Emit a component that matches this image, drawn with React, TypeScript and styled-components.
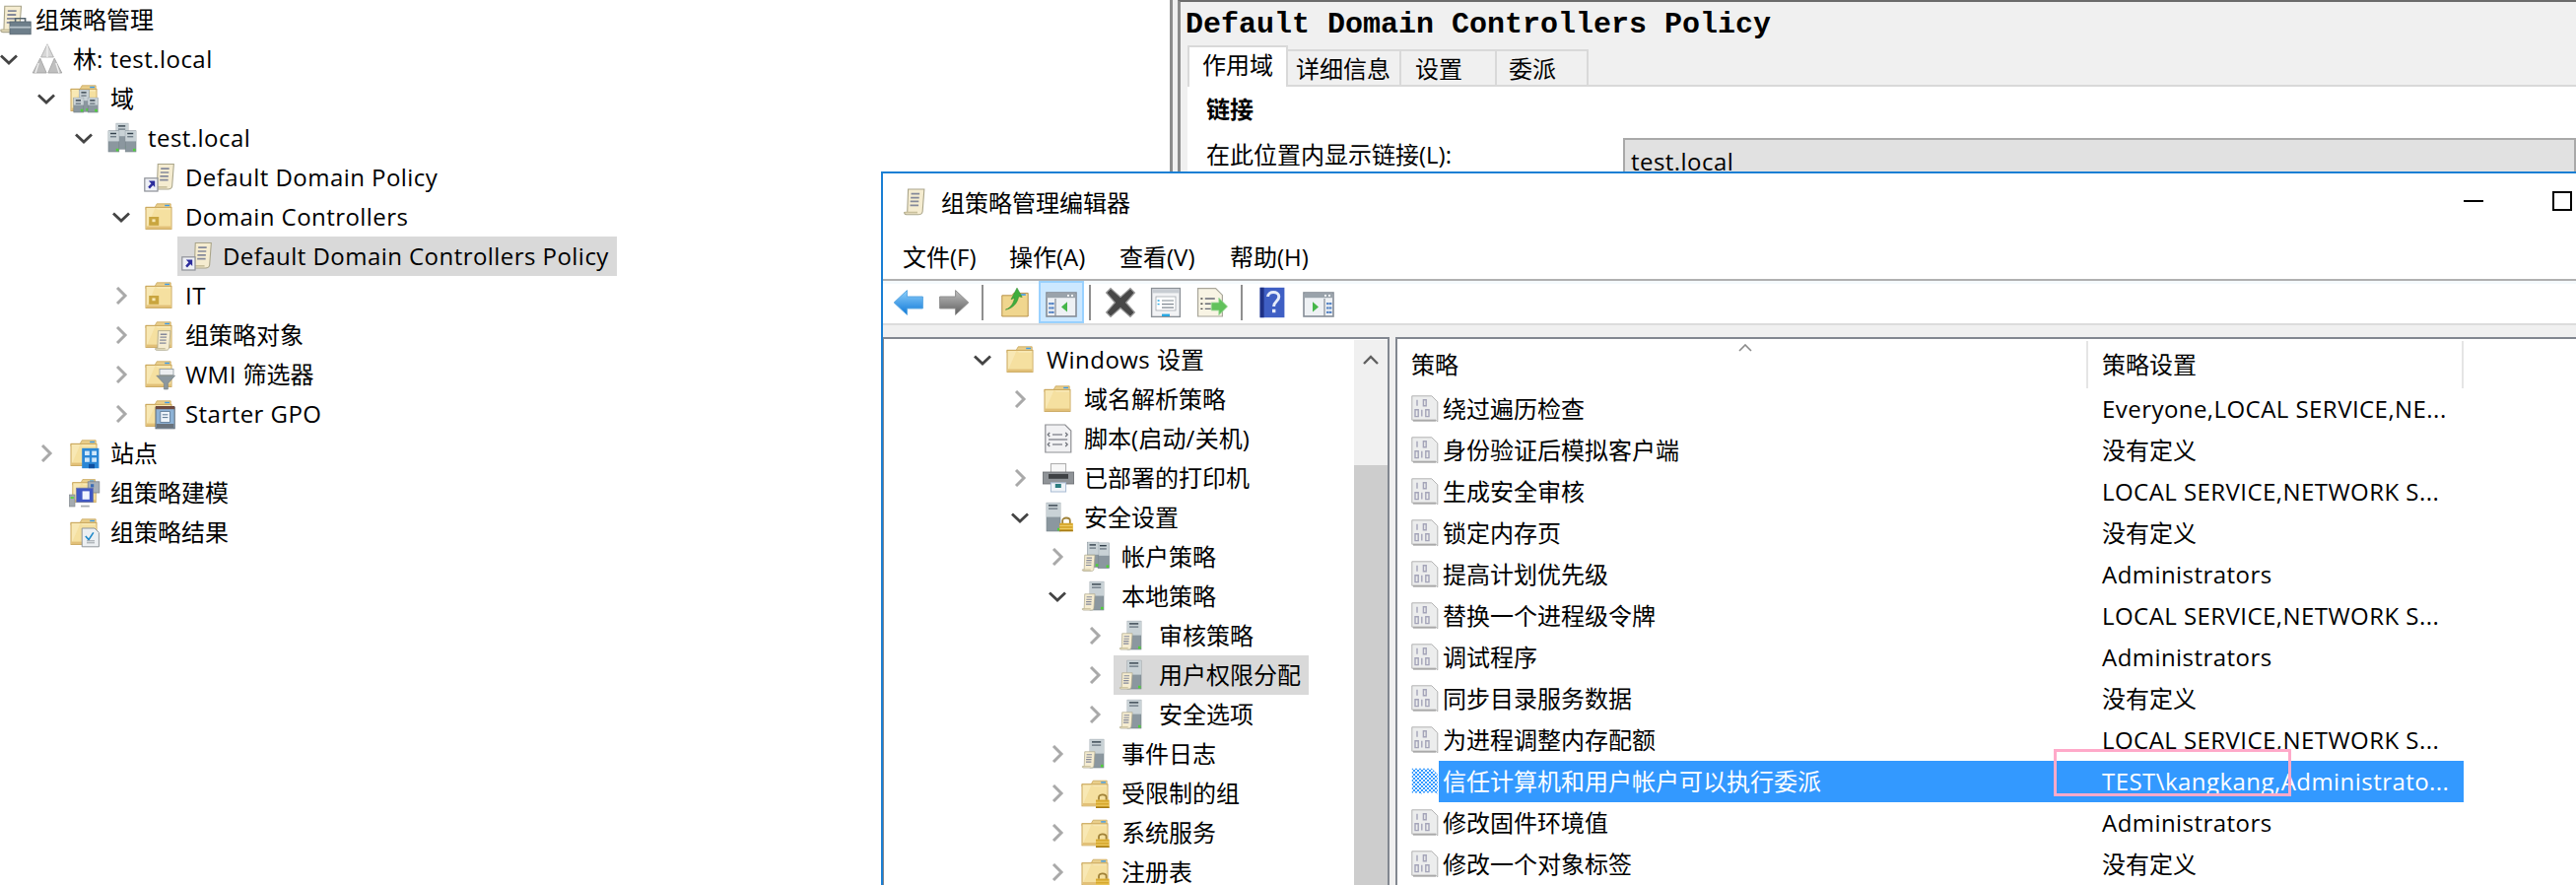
import React from "react";
import styled, { createGlobalStyle } from "styled-components";

const Global = createGlobalStyle`
  html, body { margin: 0; padding: 0; background: #fff; overflow: hidden; }
  body { font-family: "Open Sans", "Noto Sans CJK SC", sans-serif; font-size: 24px; color: #000; }
`;

const Page = styled.div`
  position: relative;
  width: 2614px;
  height: 898px;
  overflow: hidden;
  background: #fff;
  display: grid;
  grid-template-columns: 1187px 1fr;
`;

/* Latin runs are spaced a little wider than Open Sans to match the reference's UI font. */
const Latin = styled.span`
  letter-spacing: 0.45px;
`;

const Txt = ({ children }: { children: string }) => (
  <>
    {children.split(/([\x20-\x7e]+)/).map((part, i) =>
      i % 2 === 1 ? <Latin key={i}>{part}</Latin> : part
    )}
  </>
);

/* ---------- drawing helpers ---------- */
const Svg = styled.svg<{ $w: number; $h: number }>`
  display: block;
  flex: none;
  width: ${(p) => p.$w}px;
  height: ${(p) => p.$h}px;
`;

const Folder = () => (
  <g>
    <path d="M1 3.2h4.6L6.6 1.4h7v3H1z" fill="#e9cf8c" stroke="#c9a65a" strokeWidth=".4" />
    <rect x="10.6" y="1.9" width="2.4" height=".7" fill="#3d9be9" />
    <rect x="1" y="3.2" width="13" height="11" fill="#f8e8b4" stroke="#c9a65a" strokeWidth=".5" />
    <path d="M5.8 3.4 7 4.4h6.8v9.6H1.2" fill="#f3d98f" opacity=".55" />
    <rect x="1.2" y="12.8" width="12.6" height="1.2" fill="#e2c078" />
  </g>
);

const Tower = ({ x, y, h = 12, w = 6 }: { x: number; y: number; h?: number; w?: number }) => (
  <g>
    <rect x={x} y={y} width={w} height={h} fill="#8b979f" stroke="#76828a" strokeWidth=".3" />
    <rect x={x} y={y} width={w} height={h * 0.5} fill="#c9d2d6" />
    <rect x={x + 1} y={y + 1} width={w - 2.4} height=".7" fill="#34424d" />
    <rect x={x + 1} y={y + 2.6} width={w - 2.4} height=".7" fill="#6f7c86" />
    <rect x={x + w - 1.5} y={y + h - 1.6} width="1.3" height="1.3" fill="#4fd03a" />
  </g>
);

const Scroll = ({ x, y, s = 1 }: { x: number; y: number; s?: number }) => (
  <g transform={`translate(${x} ${y}) scale(${s})`}>
    <path d="M2 1h7.6L8.8 11.6c-.2 1.2-1 1.4-2 1.4H1.2c-.8 0-1-.4-1-1h1.400z" fill="#f5ecd0" stroke="#a9a489" strokeWidth=".5" />
    <path d="M3.400 3.200h4M3.200 5h4M3 6.800h4M2.900 8.600h4" stroke="#85899a" strokeWidth=".8" />
    <path d="M.4 12h6" stroke="#c9c09c" strokeWidth=".8" />
  </g>
);

const Lock = ({ x, y }: { x: number; y: number }) => (
  <g transform={`translate(${x} ${y})`}>
    <path d="M1.700 3.400V2c0-1.800 3.800-1.800 3.800 0v1.400" fill="none" stroke="#a08238" strokeWidth=".9" />
    <rect x=".2" y="3.300" width="6.800" height="4.200" fill="#d7a82e" />
    <path d="M.2 4.600h6.800M.2 6.100h6.800" stroke="#f1d06a" strokeWidth=".5" />
    <rect x=".2" y="6.800" width="6.800" height=".7" fill="#a67c18" />
  </g>
);

const Shortcut = () => (
  <g>
    <rect x=".4" y="8.400" width="6.600" height="6.600" fill="#eef0f6" stroke="#8d9097" strokeWidth=".6" />
    <path d="M2.400 9.800h3.200V13l-1-1-1.600 1.800-.9-.9 1.600-1.800z" fill="#2b2c9c" />
  </g>
);

const WinPane = ({ flip }: { flip?: boolean }) => (
  <g>
    <rect x=".5" y="3" width="15" height="12" fill="#eef1f4" stroke="#858d96" strokeWidth=".8" />
    <rect x=".9" y="3.400" width="14.200" height="2.200" fill="#9aa3ab" />
    <rect x="11" y="4" width="1" height=".9" fill="#fff" />
    <rect x="13" y="4" width="1" height=".9" fill="#fff" />
    <path d={flip ? "M11 6v9" : "M5 6v9"} stroke="#858d96" strokeWidth=".6" />
    {(flip ? [12, 13.4] : [1.6, 3]).map((x) => (
      <g key={x}>
        <rect x={x} y="8" width="1.300" height="1.100" fill="#5a87c6" />
        <rect x={x} y="10.200" width="1.300" height="1.100" fill="#5a87c6" />
        <rect x={x} y="12.400" width="1.300" height="1.100" fill="#5a87c6" />
      </g>
    ))}
    <path d={flip ? "M5 7.600l3 2.600-3 2.600z" : "M11 7.600l-3 2.600 3 2.600z"} fill="#45b649" />
  </g>
);

const drawings: Record<string, React.ReactNode> = {
  root: (
    <>
      <Scroll x={0.2} y={0} s={1.1} />
      <rect x="5" y="9" width="10.600" height="6.400" fill="#6d7e8a" stroke="#56656f" strokeWidth=".4" />
      <path d="M7.800 9V7.400h5V9" fill="none" stroke="#56656f" strokeWidth=".8" />
      <rect x="5" y="11.400" width="10.600" height=".9" fill="#b5c1c9" />
    </>
  ),
  forest: (
    <>
      <path d="M8 .4 11.200 7H4.800z" fill="#d7d7d7" stroke="#a8a8a8" strokeWidth=".4" />
      <path d="M4.400 7.600 7.600 15H.6z" fill="#bfbfbf" stroke="#a0a0a0" strokeWidth=".4" />
      <path d="M11.600 7.600 15.400 15H8.400z" fill="#bfbfbf" stroke="#a0a0a0" strokeWidth=".4" />
      <path d="M8 .8V7M3.600 10 2 15M12.400 10 14 15" stroke="#efefef" strokeWidth=".7" />
    </>
  ),
  domains: (
    <>
      <Folder />
      <Tower x={5.2} y={3.6} h={11} w={5} />
      <Tower x={2.4} y={7.6} h={7.4} w={5} />
      <Tower x={9.6} y={7.6} h={7.4} w={5} />
    </>
  ),
  domain: (
    <>
      <Tower x={5} y={0.6} h={13} w={6} />
      <Tower x={1} y={4.4} h={10.6} w={5.4} />
      <Tower x={9.6} y={4.4} h={10.6} w={5.4} />
    </>
  ),
  link: (
    <>
      <Scroll x={5} y={0.2} s={1.06} />
      <Shortcut />
    </>
  ),
  ou: (
    <>
      <Folder />
      <rect x="2.600" y="8" width="5" height="4.400" fill="#c9a53f" />
      <rect x="4.200" y="9.200" width="1.600" height="1.400" fill="#f8e8b4" />
    </>
  ),
  gpos: (
    <>
      <Folder />
      <Scroll x={5.6} y={5} s={0.82} />
    </>
  ),
  wmi: (
    <>
      <Folder />
      <rect x="8" y="5.200" width="7" height="3.200" fill="#eceef0" stroke="#8d969c" strokeWidth=".4" />
      <path d="M6.400 8.600h9.400l-3.600 4v2.900h-2v-2.900z" fill="#8b979e" stroke="#6f7a80" strokeWidth=".3" />
    </>
  ),
  starter: (
    <>
      <Folder />
      <rect x="6" y="4.600" width="9.600" height="10.800" fill="#8db2d6" stroke="#5d6670" strokeWidth=".5" />
      <rect x="6" y="4" width="9.600" height="1.600" fill="#6e4a40" />
      <rect x="8.400" y="6.800" width="4.800" height="5.400" fill="#eef4fa" stroke="#5a7590" strokeWidth=".4" />
      <path d="M9.400 8.400h2.800M9.400 9.800h2.800" stroke="#5a7590" strokeWidth=".5" />
      <rect x="6.400" y="13" width="8.800" height="2" fill="#69727c" />
    </>
  ),
  sites: (
    <>
      <Folder />
      <rect x="6.600" y="5.400" width="8.600" height="10.200" fill="#2b87d6" />
      <rect x="8" y="6.800" width="2.400" height="2.200" fill="#cfe7fa" />
      <rect x="11.600" y="6.800" width="2.400" height="2.200" fill="#cfe7fa" />
      <rect x="8" y="10.200" width="2.400" height="2.200" fill="#cfe7fa" />
      <rect x="11.600" y="10.200" width="2.400" height="2.200" fill="#cfe7fa" />
      <rect x="10" y="13.400" width="3" height="2.200" fill="#0e4fa0" />
    </>
  ),
  modeling: (
    <>
      <g transform="translate(1 0) scale(.9)"><Folder /></g>
      <rect x="9.600" y="2.400" width="5.800" height="5.600" fill="#a8b0b8" stroke="#7c848c" strokeWidth=".4" />
      <rect x="11" y="3.600" width="1.600" height="1.600" fill="#3c6db4" />
      <rect x="3.800" y="5.600" width="8.400" height="7.200" fill="#3f57c4" stroke="#7079a8" strokeWidth=".4" />
      <rect x="6.800" y="7.200" width="3.600" height="4.200" fill="#f0f4ff" />
      <rect x=".2" y="9" width="2.800" height="6" fill="#a5abb0" stroke="#7a8086" strokeWidth=".3" />
      <rect x=".8" y="10" width="1.600" height="1" fill="#5bd048" />
      <path d="M6 14.800h4.400" stroke="#a6abb0" strokeWidth=".9" />
    </>
  ),
  results: (
    <>
      <Folder />
      <path d="M6.600 6h6.400l2.200 2.200v7.200H6.600z" fill="#eceff2" stroke="#8f959a" strokeWidth=".5" />
      <path d="m8.400 10 1.600 1.800 2.400-3.600" fill="none" stroke="#1e88c8" strokeWidth=".8" />
      <path d="M9 13.400h4M9 12.400h4" stroke="#9aa0a6" strokeWidth=".5" />
    </>
  ),
  folder: <Folder />,
  script: (
    <>
      <path d="M1.400 1h10l3 3v11h-13z" fill="#f1f1f3" stroke="#8e8f93" strokeWidth=".6" />
      <path d="M3.600 5l-1 1 1 1M11.600 5l1 1-1 1M3.600 10l-1 1 1 1M11.600 10l1 1-1 1" fill="none" stroke="#6d7078" strokeWidth=".6" />
      <path d="M5 6h5M5 11h5M3 8.500h9.600" stroke="#8d8f98" strokeWidth=".7" />
    </>
  ),
  printer: (
    <>
      <rect x="4.200" y=".8" width="7.600" height="5" fill="#f7f7f7" stroke="#a9a9a9" strokeWidth=".5" />
      <rect x=".2" y="5" width="15.600" height="6" fill="#8f9397" stroke="#696d71" strokeWidth=".4" />
      <rect x="3" y="6" width="10" height="2.400" fill="#3e4144" />
      <rect x="4.200" y="10.400" width="7.600" height="4.600" fill="#eef3f8" stroke="#a7bad2" strokeWidth=".5" />
      <rect x="6.400" y="11" width="3" height="2" fill="#2c7d80" />
    </>
  ),
  secure: (
    <>
      <Tower x={2} y={0.6} h={14.4} w={7} />
      <Lock x={8.4} y={7.6} />
    </>
  ),
  accounts: (
    <>
      <Tower x={9} y={1} h={12.8} w={5.8} />
      <Tower x={3.8} y={0.6} h={12.6} w={5.6} />
      <Scroll x={1} y={6.4} s={0.68} />
    </>
  ),
  policy: (
    <>
      <Tower x={5} y={0.6} h={14.4} w={7} />
      <Scroll x={1} y={6.2} s={0.68} />
    </>
  ),
  folderLock: (
    <>
      <g transform="translate(0 .2)"><Folder /></g>
      <Lock x={7.8} y={8} />
    </>
  ),
  back: (
    <>
      <defs>
        <linearGradient id="bk" x1="0" y1="0" x2="0" y2="1">
          <stop offset="0" stopColor="#8fd0fb" />
          <stop offset="1" stopColor="#0f78d8" />
        </linearGradient>
      </defs>
      <path d="M.6 8 7.200 1.800V5h8v6h-8v3.200z" fill="url(#bk)" stroke="#5aa6e2" strokeWidth=".5" />
    </>
  ),
  forward: (
    <>
      <defs>
        <linearGradient id="fw" x1="0" y1="0" x2="0" y2="1">
          <stop offset="0" stopColor="#c0c0c0" />
          <stop offset="1" stopColor="#5f5f5f" />
        </linearGradient>
      </defs>
      <path d="M15.400 8 8.800 1.800V5h-8v6h8v3.200z" fill="url(#fw)" stroke="#8f8f8f" strokeWidth=".5" />
    </>
  ),
  up: (
    <>
      <path d="M1.400 4.400h5l1-1.200h7.200V15H1.400z" fill="#f0d68e" stroke="#b9934a" strokeWidth=".5" />
      <rect x="11" y="3.600" width="2.400" height=".8" fill="#3d9be9" />
      <path d="M3.200 11.600c2.800-1 4-3.200 4.600-6L6 6.400 9 .6l2.600 4.600-1.800-.3C9.400 8 7 11 3.200 11.600z" fill="#3fae3c" stroke="#2d8c2c" strokeWidth=".3" />
    </>
  ),
  treeOn: <WinPane />,
  treeOff: <WinPane flip />,
  del: (
    <path d="M.8 3 3 .8 8 5.200 13 .8 15.200 3 10.800 8l4.400 5-2.200 2.200L8 10.800 3 15.200.8 13 5.200 8z" fill="#474747" stroke="#9a9a9a" strokeWidth=".6" />
  ),
  props: (
    <>
      <rect x=".8" y=".8" width="14.400" height="14.400" fill="#f2f3f5" stroke="#8b9096" strokeWidth=".7" />
      <rect x="1.200" y="1.200" width="13.600" height="2" fill="#c7ccd2" />
      <rect x="3" y="5" width="10" height="7" fill="#fff" stroke="#a3a8ae" strokeWidth=".4" />
      <path d="M6 7h6M6 8.800h6M6 10.600h6" stroke="#7f8790" strokeWidth=".6" />
      <path d="M3.800 7h1M3.800 8.800h1" stroke="#29a7e1" strokeWidth=".7" />
      <rect x="6" y="13.800" width="4" height="1.200" fill="#29a7e1" />
    </>
  ),
  exportList: (
    <>
      <path d="M.8.800h9l3.400 3.400v10.800H.8z" fill="#f8f4e4" stroke="#a8a69a" strokeWidth=".6" />
      <path d="M4.400 6h5M4.400 8.600h3M4.400 11.200h3" stroke="#666a75" strokeWidth=".7" />
      <path d="M2.200 6h1M2.200 8.600h1M2.200 11.200h1" stroke="#444" strokeWidth=".7" />
      <path d="M7.600 8h3.800V5.600L15.800 10l-4.400 4.400V12H7.600z" fill="#62c25c" stroke="#a5dca0" strokeWidth=".4" />
    </>
  ),
  help: (
    <>
      <rect x="1.800" y=".4" width="12.400" height="15.200" fill="#3f5fc4" />
      <rect x="1.800" y=".4" width="2" height="15.200" fill="#1f3286" />
      <path d="M5.800 5c0-3 5.600-3 5.600 0 0 2.400-2.600 2.400-2.600 5" fill="none" stroke="#e6ecfa" strokeWidth="1.500" />
      <rect x="8" y="11.400" width="1.700" height="1.700" fill="#e6ecfa" />
    </>
  ),
};

const Icon = ({ name, size = 32 }: { name: string; size?: number }) => (
  <Svg $w={size} $h={size} viewBox="0 0 16 16" aria-hidden="true">
    {drawings[name]}
  </Svg>
);

const BinaryIcon = ({ selected }: { selected?: boolean }) => (
  <Svg $w={28} $h={28} viewBox="0 0 14 14" aria-hidden="true">
    {selected ? (
      <>
        <defs>
          <pattern id="chk" width="2" height="2" patternUnits="userSpaceOnUse">
            <rect width="2" height="2" fill="#ffffff" />
            <rect width="1" height="1" fill="#3399ff" />
            <rect x="1" y="1" width="1" height="1" fill="#3399ff" />
          </pattern>
        </defs>
        <path d="M.4.400h10l3 3v10l-1-.8-6.600.2-1 .8-.8-.8H.4z" fill="url(#chk)" />
      </>
    ) : (
      <>
        <path d="M.4.400h10l3 3v10l-1-.8H.4z" fill="#eceded" stroke="#b3b3b3" strokeWidth=".5" />
        <path d="M1 12.900h11.500" stroke="#a9a9a9" strokeWidth=".9" />
        <path d="M3 2.400v3M6.200 2.400h1.400v3H6.200zM2 7.400h1.600v3.400H2zM5.400 7.400v3.400M7.400 7.400H9v3.400H7.400z" fill="none" stroke="#a4a4b8" strokeWidth=".7" />
      </>
    )}
  </Svg>
);

const ChevronSvg = ({ open }: { open?: boolean }) =>
  open ? (
    <Svg $w={18} $h={18} viewBox="0 0 18 18" aria-hidden="true">
      <path d="M1 5.500 9 13l8-7.500" fill="none" stroke="#444" strokeWidth="2.800" />
    </Svg>
  ) : (
    <Svg $w={18} $h={18} viewBox="0 0 18 18" aria-hidden="true">
      <path d="M5 1l8 8-8 8" fill="none" stroke="#a9a9a9" strokeWidth="3" />
    </Svg>
  );

/* ---------- tree ---------- */
const TreeList = styled.div<{ $top?: number }>`
  padding-top: ${(p) => p.$top ?? 0}px;
  min-width: 0;
`;

const TreeRowBox = styled.div<{ $pad: number }>`
  display: flex;
  align-items: center;
  height: 40px;
  padding-left: ${(p) => p.$pad}px;
  white-space: nowrap;
`;

const ChevronSlot = styled.span`
  width: 18px;
  flex: none;
`;

const TreeItem = styled.div<{ $selected?: boolean }>`
  display: flex;
  align-items: center;
  height: 40px;
  margin-left: 10px;
  padding: 0 8px 0 4px;
  background: ${(p) => (p.$selected ? "#d9d9d9" : "transparent")};
`;

const TreeLabel = styled.span`
  margin-left: 10px;
  line-height: 40px;
`;

const RootRow = styled.div`
  display: flex;
  align-items: center;
  height: 40px;
  white-space: nowrap;
`;

const RootLabel = styled.span`
  margin-left: 4px;
  line-height: 40px;
`;

type Node = { l: number; icon: string; text: string; state?: "open" | "closed"; selected?: boolean };

const TreeRow = ({ node, base }: { node: Node; base: number }) => (
  <TreeRowBox $pad={base + node.l * 38}>
    <ChevronSlot>{node.state && <ChevronSvg open={node.state === "open"} />}</ChevronSlot>
    <TreeItem $selected={node.selected}>
      <Icon name={node.icon} />
      <TreeLabel><Txt>{node.text}</Txt></TreeLabel>
    </TreeItem>
  </TreeRowBox>
);

const consoleTree: Node[] = [
  { l: 0, icon: "forest", text: "林: test.local", state: "open" },
  { l: 1, icon: "domains", text: "域", state: "open" },
  { l: 2, icon: "domain", text: "test.local", state: "open" },
  { l: 3, icon: "link", text: "Default Domain Policy" },
  { l: 3, icon: "ou", text: "Domain Controllers", state: "open" },
  { l: 4, icon: "link", text: "Default Domain Controllers Policy", selected: true },
  { l: 3, icon: "ou", text: "IT", state: "closed" },
  { l: 3, icon: "gpos", text: "组策略对象", state: "closed" },
  { l: 3, icon: "wmi", text: "WMI 筛选器", state: "closed" },
  { l: 3, icon: "starter", text: "Starter GPO", state: "closed" },
  { l: 1, icon: "sites", text: "站点", state: "closed" },
  { l: 1, icon: "modeling", text: "组策略建模" },
  { l: 1, icon: "results", text: "组策略结果" },
];

const editorTree: Node[] = [
  { l: 0, icon: "folder", text: "Windows 设置", state: "open" },
  { l: 1, icon: "folder", text: "域名解析策略", state: "closed" },
  { l: 1, icon: "script", text: "脚本(启动/关机)" },
  { l: 1, icon: "printer", text: "已部署的打印机", state: "closed" },
  { l: 1, icon: "secure", text: "安全设置", state: "open" },
  { l: 2, icon: "accounts", text: "帐户策略", state: "closed" },
  { l: 2, icon: "policy", text: "本地策略", state: "open" },
  { l: 3, icon: "policy", text: "审核策略", state: "closed" },
  { l: 3, icon: "policy", text: "用户权限分配", state: "closed", selected: true },
  { l: 3, icon: "policy", text: "安全选项", state: "closed" },
  { l: 2, icon: "policy", text: "事件日志", state: "closed" },
  { l: 2, icon: "folderLock", text: "受限制的组", state: "closed" },
  { l: 2, icon: "folderLock", text: "系统服务", state: "closed" },
  { l: 2, icon: "folderLock", text: "注册表", state: "closed" },
];

/* ---------- background policy panel ---------- */
const BackFrame = styled.div`
  border-left: 3px solid #8c8c8c;
  padding-left: 5px;
  background: #f0f0f0;
  min-width: 0;
`;

const BackPanel = styled.div`
  border-left: 3px solid #8c8c8c;
  border-top: 2px solid #6b6b6b;
  background: #f0f0f0;
  height: 100%;
`;

const PolicyTitle = styled.div`
  height: 42px;
  padding-left: 5px;
  font: bold 30px/46px "Liberation Mono", monospace;
  white-space: pre;
`;

const Tabs = styled.div`
  display: flex;
  align-items: flex-end;
  height: 42px;
  margin-left: 7px;
  border-bottom: 2px solid #d9d9d9;
`;

const Tab = styled.div<{ $w: number; $pad: number; $active?: boolean }>`
  width: ${(p) => p.$w}px;
  height: ${(p) => (p.$active ? 42 : 36)}px;
  padding-left: ${(p) => p.$pad}px;
  box-sizing: border-box;
  line-height: 36px;
  background: ${(p) => (p.$active ? "#fff" : "#f0f0f0")};
  border: 2px solid #d9d9d9;
  border-bottom: none;
  border-left-width: ${(p) => (p.$active ? 2 : 0)}px;
  margin-bottom: ${(p) => (p.$active ? -2 : 0)}px;
  position: relative;
`;

const TabBody = styled.div`
  margin-left: 7px;
  background: #fff;
  height: 400px;
  padding: 5px 0 0 19px;
`;

const SectionHeading = styled.div`
  font-weight: 700;
  line-height: 36px;
`;

const LinkRow = styled.div`
  display: flex;
  margin-top: 11px;
`;

const LinkLabel = styled.div`
  width: 423px;
  flex: none;
  line-height: 34px;
`;

const LinkValue = styled.div`
  flex: 1;
  height: 70px;
  box-sizing: border-box;
  padding: 8px 0 0 6px;
  line-height: 28px;
  background: #e1e1e1;
  border: 2px solid #a9a9a9;
`;

/* ---------- editor window ---------- */
const EditorWindow = styled.div`
  position: absolute;
  left: 894px;
  top: 174px;
  right: 0;
  bottom: 0;
  display: flex;
  flex-direction: column;
  background: #fff;
  border-top: 2px solid #1a7fd4;
  border-left: 2px solid #1a7fd4;
`;

const TitleBar = styled.div`
  display: flex;
  align-items: center;
  height: 56px;
  flex: none;
  padding: 0 4px 0 17px;
`;

const WindowTitle = styled.span`
  margin-left: 12px;
`;

const WindowControls = styled.div`
  margin-left: auto;
  display: flex;
  align-items: center;
  gap: 70px;
`;

const MinGlyph = styled.span`
  width: 20px;
  height: 2px;
  background: #000;
`;

const MaxGlyph = styled.span`
  width: 20px;
  height: 20px;
  box-sizing: border-box;
  border: 2px solid #000;
`;

const MenuBar = styled.div`
  display: flex;
  align-items: center;
  flex: none;
  padding: 3px 0 0 20px;
  box-sizing: border-box;
  height: 53px;
  border-bottom: 2px solid #b0b0b0;
`;

const MenuItem = styled.span<{ $w: number }>`
  width: ${(p) => p.$w}px;
`;

const Toolbar = styled.div`
  display: flex;
  align-items: center;
  flex: none;
  height: 45px;
  box-sizing: border-box;
  padding-left: 3px;
  background: linear-gradient(#f5fafd 0 3px, #fff 3px);
  border-bottom: 2px solid #dcdcdc;
`;

const ToolButton = styled.div<{ $gap?: number; $active?: boolean }>`
  width: 46px;
  height: 43px;
  flex: none;
  box-sizing: border-box;
  display: flex;
  align-items: center;
  justify-content: center;
  margin-left: ${(p) => p.$gap ?? 0}px;
  background: ${(p) => (p.$active ? "#cce8ff" : "transparent")};
  border: 2px solid ${(p) => (p.$active ? "#99d1ff" : "transparent")};
`;

const ToolSep = styled.div<{ $gap: number }>`
  width: 2px;
  height: 36px;
  flex: none;
  margin-left: ${(p) => p.$gap}px;
  background: #8f8f8f;
`;

const Workspace = styled.div`
  flex: 1;
  min-height: 0;
  display: flex;
  gap: 6px;
  padding-top: 12px;
  background: #f0f0f0;
`;

const TreePane = styled.div`
  width: 514px;
  flex: none;
  display: flex;
  background: #fff;
  border-top: 2px solid #828790;
  border-right: 2px solid #828790;
  border-left: 1px solid #828790;
  box-sizing: border-box;
  overflow: hidden;
`;

const TreeViewport = styled.div`
  flex: 1;
  min-width: 0;
  overflow: hidden;
  margin-left: -1px;
`;

const ScrollBar = styled.div`
  width: 34px;
  flex: none;
  margin-top: 1px;
  display: flex;
  flex-direction: column;
`;

const ScrollButton = styled.div`
  height: 40px;
  display: flex;
  align-items: center;
  justify-content: center;
  background: #f0f0f0;
`;

const ScrollTrack = styled.div`
  height: 87px;
  background: #f0f0f0;
`;

const ScrollThumb = styled.div`
  flex: 1;
  background: #cdcdcd;
`;

const ListPane = styled.div`
  flex: 1;
  min-width: 0;
  background: #fff;
  border-top: 2px solid #828790;
  border-left: 2px solid #828790;
`;

const ListGrid = styled.div`
  display: grid;
  grid-template-columns: 701px 381px;
  width: 1082px;
`;

const HeaderRow = styled(ListGrid)`
  height: 50px;
  padding-top: 2px;
  box-sizing: border-box;
`;

const HeaderCell = styled.div<{ $pad: number }>`
  position: relative;
  padding-left: ${(p) => p.$pad}px;
  line-height: 47px;
  border-right: 2px solid #e5e5e5;
`;

const SortArrow = styled.svg`
  position: absolute;
  left: 346px;
  top: 3px;
  width: 14px;
  height: 8px;
`;

const ListRow = styled(ListGrid)`
  position: relative;
  height: 42px;
  line-height: 42px;
  white-space: nowrap;
`;

const NameCell = styled.div`
  display: flex;
  align-items: center;
  padding-left: 14px;
`;

const NameText = styled.div<{ $selected?: boolean }>`
  flex: 1;
  padding-left: 4px;
  background: ${(p) => (p.$selected ? "#3399ff" : "transparent")};
  color: ${(p) => (p.$selected ? "#fff" : "#000")};
`;

const ValueCell = styled.div<{ $selected?: boolean }>`
  padding-left: 14px;
  background: ${(p) => (p.$selected ? "#3399ff" : "transparent")};
  color: ${(p) => (p.$selected ? "#fff" : "#000")};
`;

const Annotation = styled.div`
  position: absolute;
  left: 666px;
  top: -12px;
  width: 241px;
  height: 48px;
  box-sizing: border-box;
  border: 3px solid #ffa9c9;
  pointer-events: none;
`;

const policies: [string, string, boolean?][] = [
  ["绕过遍历检查", "Everyone,LOCAL SERVICE,NE..."],
  ["身份验证后模拟客户端", "没有定义"],
  ["生成安全审核", "LOCAL SERVICE,NETWORK S..."],
  ["锁定内存页", "没有定义"],
  ["提高计划优先级", "Administrators"],
  ["替换一个进程级令牌", "LOCAL SERVICE,NETWORK S..."],
  ["调试程序", "Administrators"],
  ["同步目录服务数据", "没有定义"],
  ["为进程调整内存配额", "LOCAL SERVICE,NETWORK S..."],
  ["信任计算机和用户帐户可以执行委派", "TEST\\kangkang,Administrato...", true],
  ["修改固件环境值", "Administrators"],
  ["修改一个对象标签", "没有定义"],
];

export default function App() {
  return (
    <Page>
      <Global />
      <TreeList>
        <RootRow>
          <Icon name="root" />
          <RootLabel>组策略管理</RootLabel>
        </RootRow>
        {consoleTree.map((n) => (
          <TreeRow key={n.text} node={n} base={0} />
        ))}
      </TreeList>

      <BackFrame>
        <BackPanel>
          <PolicyTitle>Default Domain Controllers Policy</PolicyTitle>
          <Tabs>
            <Tab $w={102} $pad={13} $active>作用域</Tab>
            <Tab $w={115} $pad={8}>详细信息</Tab>
            <Tab $w={97} $pad={14}>设置</Tab>
            <Tab $w={93} $pad={12}>委派</Tab>
          </Tabs>
          <TabBody>
            <SectionHeading>链接</SectionHeading>
            <LinkRow>
              <LinkLabel>在此位置内显示链接(L):</LinkLabel>
              <LinkValue><Txt>test.local</Txt></LinkValue>
            </LinkRow>
          </TabBody>
        </BackPanel>
      </BackFrame>

      <EditorWindow>
        <TitleBar>
          <Svg $w={30} $h={30} viewBox="0 0 11 14" aria-hidden="true">
            <Scroll x={0.5} y={0.4} />
          </Svg>
          <WindowTitle>组策略管理编辑器</WindowTitle>
          <WindowControls>
            <MinGlyph />
            <MaxGlyph />
          </WindowControls>
        </TitleBar>
        <MenuBar>
          <MenuItem $w={108}>文件(F)</MenuItem>
          <MenuItem $w={112}>操作(A)</MenuItem>
          <MenuItem $w={112}>查看(V)</MenuItem>
          <MenuItem $w={112}>帮助(H)</MenuItem>
        </MenuBar>
        <Toolbar>
          <ToolButton><Icon name="back" /></ToolButton>
          <ToolButton><Icon name="forward" /></ToolButton>
          <ToolSep $gap={5} />
          <ToolButton $gap={9}><Icon name="up" /></ToolButton>
          <ToolButton $gap={1} $active><Icon name="treeOn" /></ToolButton>
          <ToolSep $gap={5} />
          <ToolButton $gap={7}><Icon name="del" /></ToolButton>
          <ToolButton><Icon name="props" /></ToolButton>
          <ToolButton $gap={1}><Icon name="exportList" /></ToolButton>
          <ToolSep $gap={6} />
          <ToolButton $gap={7}><Icon name="help" /></ToolButton>
          <ToolButton $gap={1}><Icon name="treeOff" /></ToolButton>
        </Toolbar>
        <Workspace>
          <TreePane>
            <TreeViewport>
              <TreeList $top={1}>
                {editorTree.map((n) => (
                  <TreeRow key={n.text} node={n} base={92} />
                ))}
              </TreeList>
            </TreeViewport>
            <ScrollBar>
              <ScrollButton>
                <Svg $w={16} $h={10} viewBox="0 0 16 10" aria-hidden="true">
                  <path d="M1 9l7-7 7 7" fill="none" stroke="#606060" strokeWidth="2.400" />
                </Svg>
              </ScrollButton>
              <ScrollTrack />
              <ScrollThumb />
            </ScrollBar>
          </TreePane>
          <ListPane>
            <HeaderRow>
              <HeaderCell $pad={14}>
                策略
                <SortArrow viewBox="0 0 14 8" aria-hidden="true">
                  <path d="M1 7l6-6 6 6" fill="none" stroke="#8a8a8a" strokeWidth="1.600" />
                </SortArrow>
              </HeaderCell>
              <HeaderCell $pad={14}>策略设置</HeaderCell>
            </HeaderRow>
            {policies.map(([name, value, selected]) => (
              <ListRow key={name}>
                <NameCell>
                  <BinaryIcon selected={selected} />
                  <NameText $selected={selected}>{name}</NameText>
                </NameCell>
                <ValueCell $selected={selected}><Txt>{value}</Txt></ValueCell>
                {selected && <Annotation />}
              </ListRow>
            ))}
          </ListPane>
        </Workspace>
      </EditorWindow>
    </Page>
  );
}
